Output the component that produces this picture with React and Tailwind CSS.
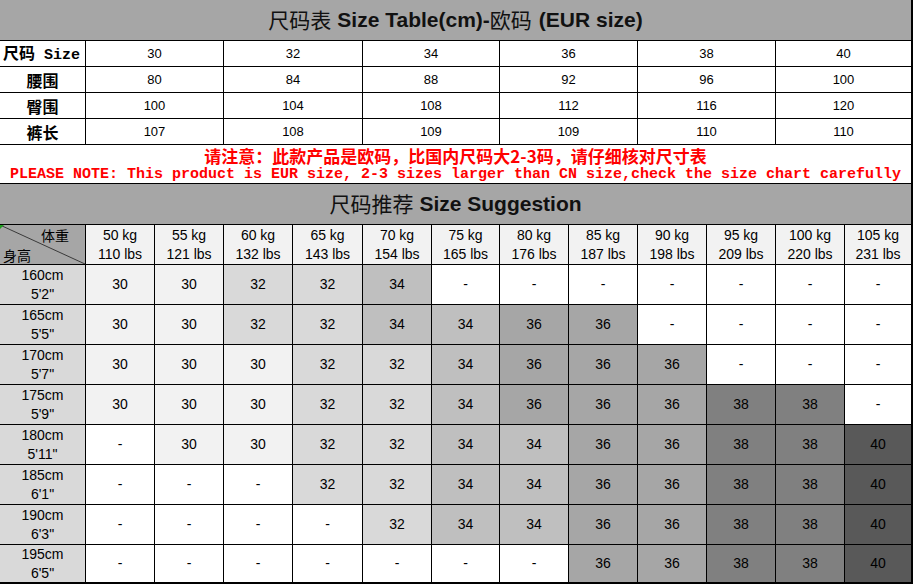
import React from "react";

const sizeRows = [
  { label: "腰围", values: [80, 84, 88, 92, 96, 100] },
  { label: "臀围", values: [100, 104, 108, 112, 116, 120] },
  { label: "裤长", values: [107, 108, 109, 109, 110, 110] },
];

const eurSizes = [30, 32, 34, 36, 38, 40];

const weights = [
  ["50 kg", "110 lbs"],
  ["55 kg", "121 lbs"],
  ["60 kg", "132 lbs"],
  ["65 kg", "143 lbs"],
  ["70 kg", "154 lbs"],
  ["75 kg", "165 lbs"],
  ["80 kg", "176 lbs"],
  ["85 kg", "187 lbs"],
  ["90 kg", "198 lbs"],
  ["95 kg", "209 lbs"],
  ["100 kg", "220 lbs"],
  ["105 kg", "231 lbs"],
];

const heights = [
  ["160cm", "5'2\""],
  ["165cm", "5'5\""],
  ["170cm", "5'7\""],
  ["175cm", "5'9\""],
  ["180cm", "5'11\""],
  ["185cm", "6'1\""],
  ["190cm", "6'3\""],
  ["195cm", "6'5\""],
];

const chart = [
  ["30", "30", "32", "32", "34", "-", "-", "-", "-", "-", "-", "-"],
  ["30", "30", "32", "32", "34", "34", "36", "36", "-", "-", "-", "-"],
  ["30", "30", "30", "32", "32", "34", "36", "36", "36", "-", "-", "-"],
  ["30", "30", "30", "32", "32", "34", "36", "36", "36", "38", "38", "-"],
  ["-", "30", "30", "32", "32", "34", "34", "36", "36", "38", "38", "40"],
  ["-", "-", "-", "32", "32", "34", "34", "36", "36", "38", "38", "40"],
  ["-", "-", "-", "-", "32", "34", "34", "36", "36", "38", "38", "40"],
  ["-", "-", "-", "-", "-", "-", "-", "36", "36", "38", "38", "40"],
];

// shade per size, like the excel sheet
const shades = {
  "30": "bg-[#f2f2f2]",
  "32": "bg-[#d9d9d9]",
  "34": "bg-[#bfbfbf]",
  "36": "bg-[#a6a6a6]",
  "38": "bg-[#808080]",
  "40": "bg-[#595959]",
  "-": "bg-white",
};

const App = () => {
  return (
    <div className="w-[914px] h-[585px] bg-white font-['Liberation_Sans','Noto_Sans_CJK_SC',sans-serif] text-black">
      <div className="w-[913px] flex flex-col gap-px bg-black border-r-2 border-b-2 border-black">
        {/* Size table title */}
        <div className="h-[40px] bg-[#a6a6a6] flex items-center justify-center text-[21px] text-[#111]">
          <span className="font-['Noto_Sans_CJK_SC',sans-serif] font-normal">尺码表</span>
          <span className="font-bold ml-[6px]">Size Table(cm)-</span>
          <span className="font-['Noto_Sans_CJK_SC',sans-serif] font-normal">欧码</span>
          <span className="font-bold ml-[7px]">(EUR size)</span>
        </div>

        {/* Size table */}
        <div className="grid grid-cols-[85px_137px_138px_136px_137px_137px_135px] grid-rows-[25px_25px_25px_25px] gap-px">
          <div className="bg-white flex items-center pl-[3px] font-bold text-[16px] leading-[20px]">
            <span className="font-['Noto_Sans_CJK_SC',sans-serif]">
              尺码
              <span className="font-['Liberation_Mono',monospace] text-[15px]">&nbsp;Size</span>
            </span>
          </div>
          {eurSizes.map((s) => (
            <div key={s} className="bg-white flex items-center justify-center text-[13px]">
              {s}
            </div>
          ))}
          {sizeRows.map((row) => (
            <React.Fragment key={row.label}>
              <div className="bg-white flex items-center justify-center font-bold text-[16px] font-['Noto_Sans_CJK_SC',sans-serif]">
                {row.label}
              </div>
              {row.values.map((v, i) => (
                <div key={i} className="bg-white flex items-center justify-center text-[13px]">
                  {v}
                </div>
              ))}
            </React.Fragment>
          ))}
        </div>

        {/* Note */}
        <div className="h-[38px] bg-white flex flex-col items-center text-[#ff0000] font-bold">
          <p className="h-[21px] text-[17px] leading-[21px] font-['Noto_Sans_CJK_SC',sans-serif]">
            请注意：此款产品是欧码，比国内尺码大2-3码，请仔细核对尺寸表
          </p>
          <p className="h-[17px] text-[15px] leading-[17px] font-['Liberation_Mono',monospace] whitespace-pre">
            PLEASE NOTE: This product is EUR size, 2-3 sizes larger than CN size,check the size chart carefully
          </p>
        </div>

        {/* Suggestion title */}
        <div className="h-[40px] bg-[#a6a6a6] flex items-center justify-center text-[21px] text-[#111]">
          <span className="font-['Noto_Sans_CJK_SC',sans-serif] font-normal">尺码推荐</span>
          <span className="font-bold ml-[6px]">Size Suggestion</span>
        </div>

        {/* Suggestion grid */}
        <div className="grid grid-cols-[85px_68px_68px_68px_69px_68px_67px_68px_68px_68px_68px_68px_66px] grid-rows-[39px_39px_39px_39px_39px_39px_39px_39px_37px] gap-px text-[14px]">
          <div className="relative bg-[#a6a6a6] flex flex-col justify-between font-['Noto_Sans_CJK_SC',sans-serif] text-[14px] leading-[18px]">
            <svg className="absolute inset-0" width="85" height="39" viewBox="0 0 85 39">
              <line x1="0" y1="0" x2="85" y2="39" stroke="#3a3a3a" strokeWidth="1" />
              <polygon points="0,0 4,0 0,4" fill="#1f9d1f" />
            </svg>
            <span className="relative self-end mr-[16px] mt-[1px]">体重</span>
            <span className="relative self-start ml-[3px]">身高</span>
          </div>
          {weights.map(([kg, lbs]) => (
            <div
              key={kg}
              className="bg-[#f2f2f2] flex flex-col items-center justify-center leading-[19px]"
            >
              <span>{kg}</span>
              <span>{lbs}</span>
            </div>
          ))}
          {heights.map(([cm, ft], r) => (
            <React.Fragment key={cm}>
              <div className="bg-[#d9d9d9] flex flex-col items-center justify-center leading-[19px]">
                <span>{cm}</span>
                <span>{ft}</span>
              </div>
              {chart[r].map((v, c) => (
                <div
                  key={c}
                  className={`${shades[v]} flex items-center justify-center`}
                >
                  {v}
                </div>
              ))}
            </React.Fragment>
          ))}
        </div>
      </div>
    </div>
  );
};

export default App;
